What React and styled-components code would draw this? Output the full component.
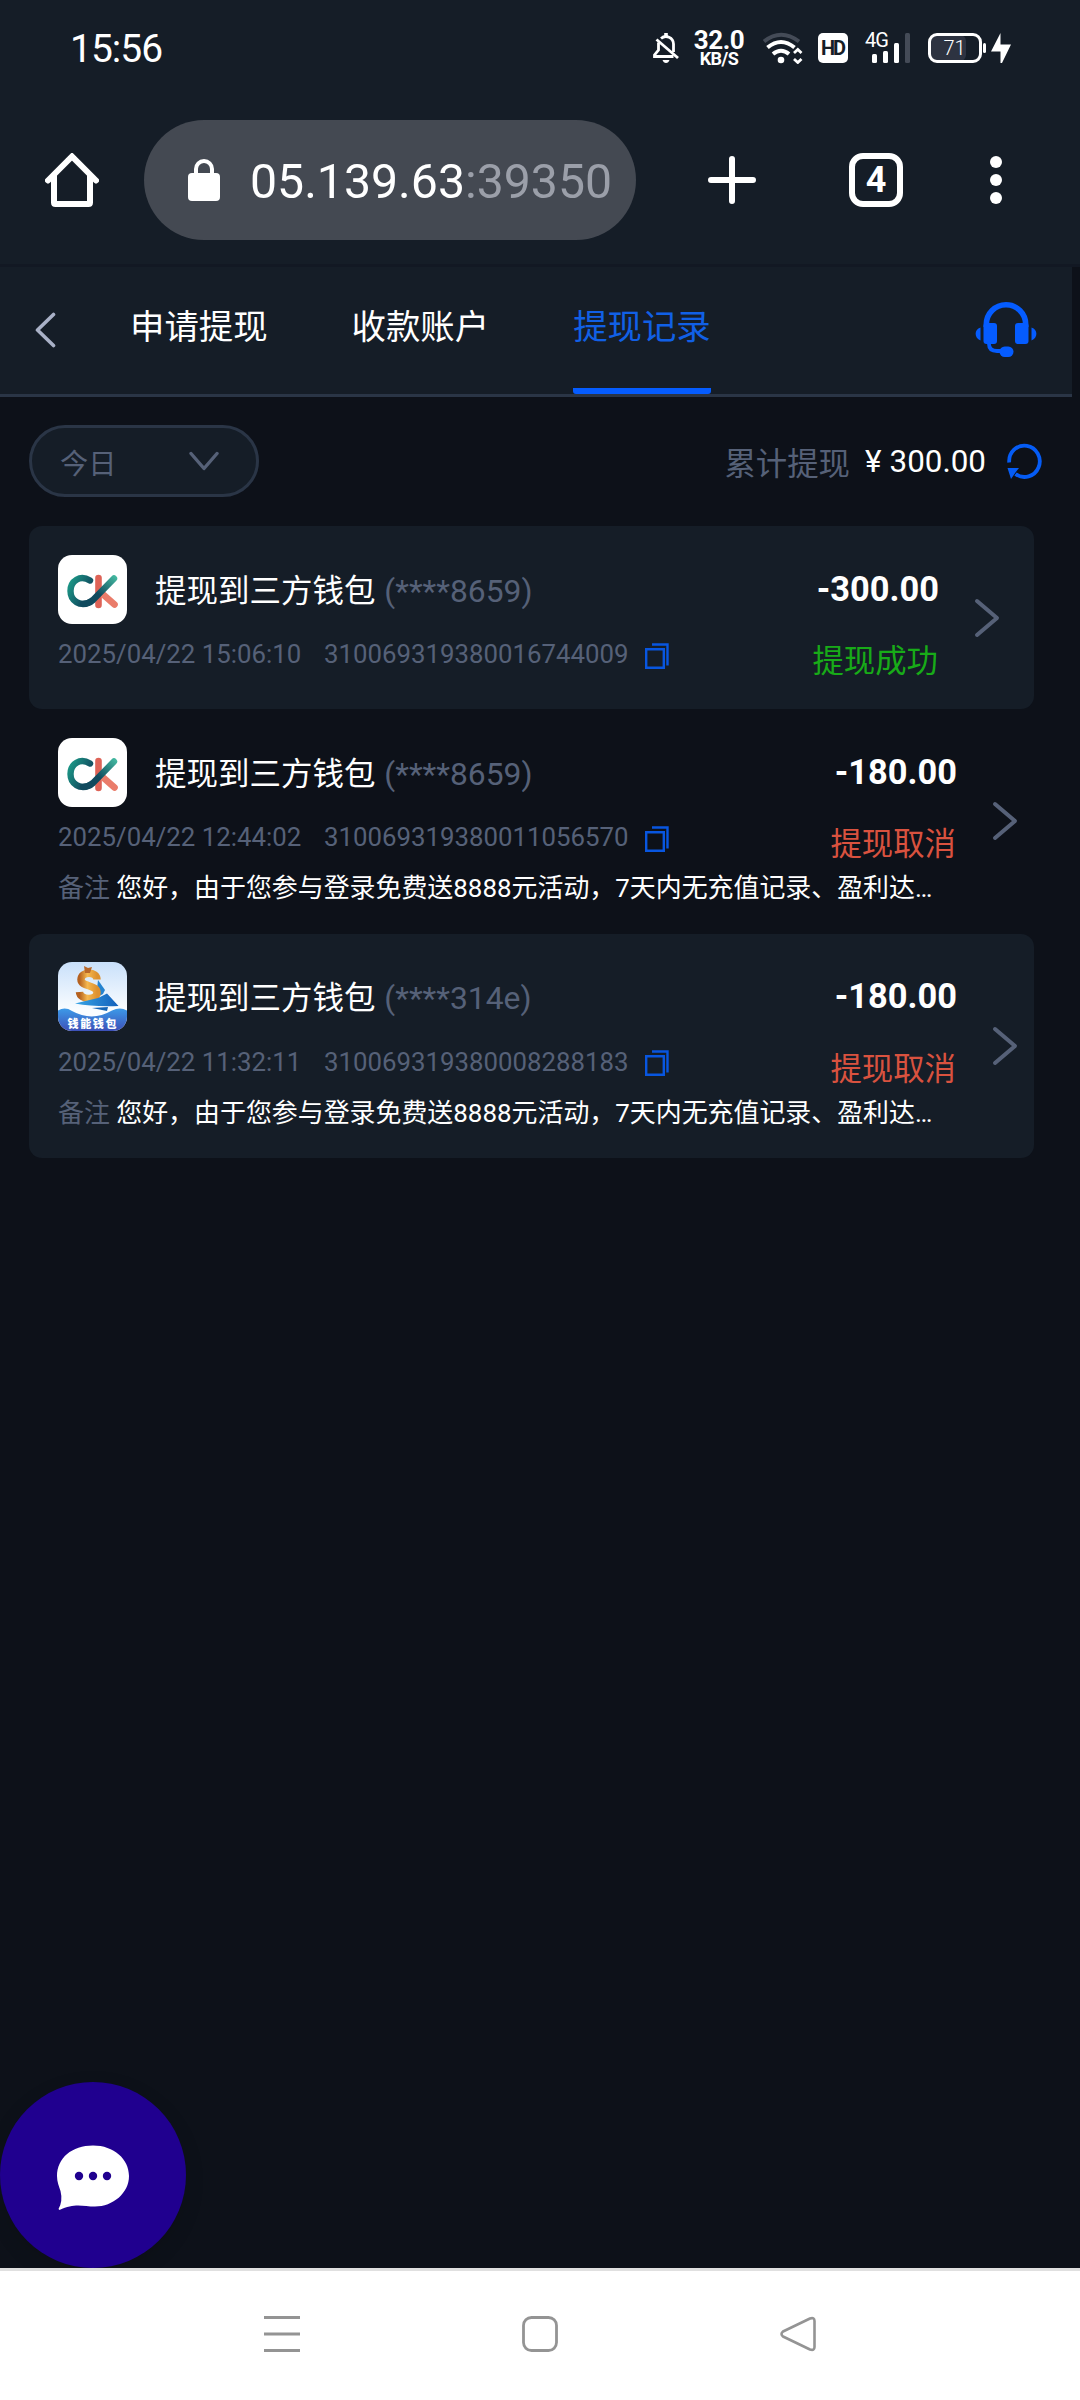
import styled, { createGlobalStyle } from "styled-components";

const RECORDS = [
  {
    id: "310069319380016744009",
    logo: "ck",
    account: "(****8659)",
    time: "2025/04/22 15:06:10",
    amount: "-300.00",
    status: "提现成功",
    success: true,
  },
  {
    id: "310069319380011056570",
    logo: "ck",
    account: "(****8659)",
    time: "2025/04/22 12:44:02",
    amount: "-180.00",
    status: "提现取消",
    remark: "您好，由于您参与登录免费送8888元活动，7天内无充值记录、盈利达…",
  },
  {
    id: "310069319380008288183",
    logo: "boat",
    account: "(****314e)",
    time: "2025/04/22 11:32:11",
    amount: "-180.00",
    status: "提现取消",
    remark: "您好，由于您参与登录免费送8888元活动，7天内无充值记录、盈利达…",
  },
];

function App() {
  return (
    <Screen>
      <GlobalStyle />
      <StatusBar />
      <BrowserBar />
      <PageHeader />
      <Filters />
      <List>
        {RECORDS.map((record, index) => (
          <RecordItem key={record.id} record={record} $filled={index % 2 === 0} />
        ))}
      </List>
      <ChatButton>
        <ChatIcon />
      </ChatButton>
      <SystemNav />
    </Screen>
  );
}

function StatusBar() {
  return (
    <StatusWrapper>
      <Clock>15:56</Clock>
      <StatusIcons>
        <BellOffIcon />
        <Speed>
          <SpeedValue>32.0</SpeedValue>
          <SpeedUnit>KB/S</SpeedUnit>
        </Speed>
        <WifiIcon />
        <HdBadge>HD</HdBadge>
        <Signal>
          <Network>4G</Network>
          <SignalIcon />
        </Signal>
        <BatteryIcon />
      </StatusIcons>
    </StatusWrapper>
  );
}

function BrowserBar() {
  return (
    <BrowserWrapper>
      <svg width="54" height="54" viewBox="0 0 54 54" fill="none" stroke="#fff">
        <path d="M3 27.500 27 3.500l24 24" strokeWidth="6" strokeLinecap="round" />
        <path d="M9 22v27.500q0 1.500 1.500 1.500h33q1.500 0 1.500-1.500V22" strokeWidth="6" />
      </svg>
      <UrlBar>
        <svg width="32" height="42" viewBox="0 0 32 42">
          <rect y="14" width="32" height="28" rx="4" fill="#fff" />
          <path
            d="M8 16v-6a8 8 0 0 1 16 0v6"
            fill="none"
            stroke="#fff"
            strokeWidth="4"
          />
        </svg>
        <Url>
          05.139.63<Port>:39350</Port>
        </Url>
      </UrlBar>
      <Actions>
        <svg width="48" height="48" viewBox="0 0 48 48">
          <path
            d="M24 3v42M3 24h42"
            stroke="#fff"
            strokeWidth="6"
            strokeLinecap="round"
          />
        </svg>
        <TabCount>4</TabCount>
        <svg width="12" height="48" viewBox="0 0 12 48" fill="#fff">
          <circle cx="6" cy="6" r="6" />
          <circle cx="6" cy="24" r="6" />
          <circle cx="6" cy="42" r="6" />
        </svg>
      </Actions>
    </BrowserWrapper>
  );
}

function PageHeader() {
  return (
    <HeaderWrapper>
      <svg width="21" height="36" viewBox="0 0 21 36" fill="none">
        <path
          d="M18.500 2.500 2.500 18l16 15.500"
          stroke="#a9b1c7"
          strokeWidth="3.600"
          strokeLinecap="round"
          strokeLinejoin="round"
        />
      </svg>
      <Tabs>
        <Tab>申请提现</Tab>
        <Tab>收款账户</Tab>
        <Tab $active>提现记录</Tab>
      </Tabs>
      <HeadsetIcon />
    </HeaderWrapper>
  );
}

function Filters() {
  return (
    <FiltersWrapper>
      <Select>
        今日
        <svg width="30" height="20" viewBox="0 0 30 20" fill="none">
          <path
            d="M2 2.500 15 17.500 28 2.500"
            stroke="#566178"
            strokeWidth="3.400"
            strokeLinecap="round"
            strokeLinejoin="round"
          />
        </svg>
      </Select>
      <Total>
        累计提现
        <TotalValue>
          <span>¥</span>
          <span>300.00</span>
        </TotalValue>
        <svg width="35" height="36" viewBox="0 0 35 36">
          <path
            d="M2.200 19.500A15.300 15.700 0 1 1 8.500 31"
            fill="none"
            stroke="#055cf5"
            strokeWidth="3.800"
          />
          <path d="M0.500 25h11.500l-3.500 4.500-4.500 6.500z" fill="#055cf5" />
        </svg>
      </Total>
    </FiltersWrapper>
  );
}

function RecordItem({ record, $filled }) {
  const { logo, account, time, id, amount, status, success, remark } = record;

  return (
    <Card $filled={$filled} $hasRemark={Boolean(remark)}>
      <Body>
        <Summary>
          <div>
            <TitleRow>
              {logo === "ck" ? <CkLogo /> : <BoatLogo />}
              <Title>
                提现到三方钱包 <Account>{account}</Account>
              </Title>
            </TitleRow>
            <Meta>
              <span>{time}</span>
              <span>{id}</span>
              <CopyIcon />
            </Meta>
          </div>
          <Result>
            <Amount>{amount}</Amount>
            <Status $success={success}>{status}</Status>
          </Result>
        </Summary>
        {remark && (
          <Remark>
            <Muted>备注</Muted> {remark}
          </Remark>
        )}
      </Body>
      <svg width="26" height="40" viewBox="0 0 26 40" fill="none">
        <path
          d="M3 3 23 20 3 37"
          stroke="#566178"
          strokeWidth="4"
          strokeLinecap="round"
          strokeLinejoin="round"
        />
      </svg>
    </Card>
  );
}

function SystemNav() {
  return (
    <NavWrapper>
      <svg width="36" height="36" viewBox="0 0 36 36">
        <path d="M0 1.500h36M0 18h36M0 34.500h36" stroke="#949494" strokeWidth="3" />
      </svg>
      <svg width="36" height="36" viewBox="0 0 36 36" fill="none">
        <rect
          x="1.500"
          y="1.500"
          width="33"
          height="33"
          rx="8"
          stroke="#949494"
          strokeWidth="2.800"
        />
      </svg>
      <svg width="36" height="36" viewBox="0 0 36 36" fill="none">
        <path
          d="M30 2.500 3 15.500q-3 2.500 0 5L30 33.500q4.500 1.500 4.500-2.500V5q0-4-4.500-2.500z"
          stroke="#949494"
          strokeWidth="2.600"
          strokeLinejoin="round"
        />
      </svg>
    </NavWrapper>
  );
}

function BellOffIcon() {
  return (
    <svg width="26" height="32" viewBox="0 0 26 32" fill="none" stroke="#fff">
      <path d="M8 6.500A7.500 7.500 0 0 1 20.500 12v8" strokeWidth="2.800" />
      <path d="M5.500 10.500V18L1.500 23v1.500h19" strokeWidth="2.800" />
      <path d="M13 1v4" strokeWidth="3.600" />
      <path d="M3.500 7.500 25 26" strokeWidth="2.800" />
      <path d="M9.500 28h7q-1 3-3.500 3t-3.500-3z" fill="#fff" stroke="none" />
    </svg>
  );
}

function WifiIcon() {
  return (
    <svg width="40" height="32" viewBox="0 0 40 32" fill="none">
      <path d="M1 9.500Q18 -4 36 9.500" stroke="#444b57" strokeWidth="4" />
      <path d="M4.500 15.500q13.500-11 27 0" stroke="#fff" strokeWidth="4" />
      <path d="M10 22q8-6.500 16 0" stroke="#fff" strokeWidth="4" />
      <circle cx="18" cy="28" r="3.300" fill="#fff" />
      <path
        d="m31 21 3.800-3.500L38.500 21M31 27l3.800 3.500L38.500 27"
        stroke="#fff"
        strokeWidth="2.800"
      />
    </svg>
  );
}

function SignalIcon() {
  return (
    <svg width="39" height="32" viewBox="6 0 39 32" fill="#fff">
      <rect x="6" y="22" width="5" height="9" rx="1.500" />
      <rect x="17" y="19" width="5" height="12" rx="1.500" />
      <rect x="28" y="11" width="5" height="20" rx="1.500" />
      <rect x="39" y="1" width="5" height="30" rx="1.500" fill="#444b57" />
    </svg>
  );
}

function BatteryIcon() {
  return (
    <svg width="84" height="32" viewBox="0 0 84 32">
      <rect x="3" y="3" width="35" height="26" rx="6" fill="#2d3341" />
      <rect
        x="1.500"
        y="2.500"
        width="51"
        height="27"
        rx="7.500"
        fill="none"
        stroke="#fff"
        strokeWidth="3"
      />
      <rect x="55" y="11" width="3" height="10" rx="1.500" fill="#fff" />
      <BatteryText x="15.500" y="23">
        71
      </BatteryText>
      <path d="M72.500 1v11.500H83L74 31h-1.500V19.500H63z" fill="#fff" />
    </svg>
  );
}

function HeadsetIcon() {
  return (
    <svg width="62" height="56" viewBox="0 0 62 56" fill="#055cff">
      <path
        d="M11.300 25v-2.500a19.700 19.700 0 0 1 39.400 0V25"
        fill="none"
        stroke="#055cff"
        strokeWidth="5.600"
      />
      <rect x="8.500" y="21" width="13.500" height="21" rx="3" />
      <rect x="40" y="21" width="13.500" height="21" rx="3" />
      <path d="M5.500 25.500v13C-1 36.500-1 27 5.500 25.500zM56.500 25.500v13c6.500-2 6.500-11.500 0-13z" />
      <path
        d="M14 40v2q0 7 8 7h6"
        fill="none"
        stroke="#055cff"
        strokeWidth="3.800"
      />
      <rect x="24.500" y="44.500" width="14" height="10.500" rx="5.200" />
    </svg>
  );
}

function CopyIcon() {
  return (
    <svg width="24" height="27" viewBox="0 0 24 27" fill="none">
      <path
        d="M1.200 6.200h17.600v18.600H1.200zM7 1.500h15.500V22.500"
        stroke="#0856e0"
        strokeWidth="2.400"
      />
    </svg>
  );
}

function CkLogo() {
  return (
    <svg width="69" height="69" viewBox="0 0 69 69" fill="none">
      <defs>
        <linearGradient id="ck-arm" x1="33" y1="50" x2="58" y2="22" gradientUnits="userSpaceOnUse">
          <stop offset="0.350" stopColor="#104a5e" />
          <stop offset="1" stopColor="#43b8a0" />
        </linearGradient>
        <linearGradient id="ck-curve" x1="10" y1="30" x2="30" y2="40" gradientUnits="userSpaceOnUse">
          <stop offset="0" stopColor="#1c9686" />
          <stop offset="1" stopColor="#104a5e" />
        </linearGradient>
      </defs>
      <rect width="69" height="69" rx="14" fill="#fff" />
      <path d="M40.500 23v27" stroke="#de6357" strokeWidth="6.600" strokeLinecap="round" />
      <path d="M44 38.500 56.500 49.500" stroke="#ea7c6a" strokeWidth="6.600" strokeLinecap="round" />
      <path
        d="M32 25.500C22 19.500 12.500 26 12.500 36S22 52 32 47"
        stroke="url(#ck-curve)"
        strokeWidth="6.400"
        strokeLinecap="round"
      />
      <path
        d="M25 49q5.500 0 10-4L56 23.500"
        stroke="url(#ck-arm)"
        strokeWidth="6.400"
        strokeLinecap="round"
      />
    </svg>
  );
}

function BoatLogo() {
  return (
    <svg width="69" height="69" viewBox="0 0 69 69">
      <defs>
        <linearGradient id="boat-sky" x2="0" y2="1">
          <stop offset="0" stopColor="#c9e0fa" />
          <stop offset="0.700" stopColor="#fafdff" />
        </linearGradient>
        <linearGradient id="boat-sea" x2="0" y2="1">
          <stop offset="0" stopColor="#3c9ae8" />
          <stop offset="1" stopColor="#3d50b8" />
        </linearGradient>
        <linearGradient id="boat-hull">
          <stop offset="0" stopColor="#38a5e6" />
          <stop offset="1" stopColor="#1260bb" />
        </linearGradient>
        <linearGradient id="boat-gold">
          <stop offset="0" stopColor="#b5611f" />
          <stop offset="0.450" stopColor="#f5b850" />
          <stop offset="1" stopColor="#dd9130" />
        </linearGradient>
        <clipPath id="boat-clip">
          <rect width="69" height="69" rx="14" />
        </clipPath>
      </defs>
      <g clipPath="url(#boat-clip)">
        <rect width="69" height="69" fill="url(#boat-sky)" />
        <path d="M40 18 47 28l-2 4-7 4z" fill="#2583cf" />
        <path
          d="M39 17.500C39 9 23 9 23 17.500 23 25 39 22.500 39 30.500 39 39 22 38 21.500 30"
          fill="none"
          stroke="url(#boat-gold)"
          strokeWidth="7.500"
        />
        <path d="m26 4 4 2 4-1-2 6h-5z" fill="#b9682a" />
        <path d="M17 41.500 40 36l9-4.500L60.500 44Q36 45 17 41.500z" fill="url(#boat-hull)" />
        <path d="m34 46 16-1-1 4z" fill="#1565b5" />
        <path d="M0 48.500q7-4 14 .5 20 11 40-.5 8-4 15 0V69H0z" fill="url(#boat-sea)" />
        <LogoText x="9.500" y="65.500" textLength="49">
          钱能钱包
        </LogoText>
      </g>
    </svg>
  );
}

function ChatIcon() {
  return (
    <svg width="72" height="66" viewBox="0 0 72 66">
      <path
        d="M36 .5C57 .5 72 14 72 31S56 61.500 38 61.500C26 61.500 18 57.500 2.500 65L1.500 64Q6 56 3.500 46C2 41 0 37 0 31 0 13 15 .5 36 .5z"
        fill="#fff"
      />
      <g fill="#20008f">
        <circle cx="22" cy="31" r="4.200" />
        <circle cx="36" cy="31" r="4.200" />
        <circle cx="50" cy="31" r="4.200" />
      </g>
    </svg>
  );
}

const GlobalStyle = createGlobalStyle`
  :root {
    --panel: #151d27;
    --page: #0d1119;
    --muted: #566178;
  }

  * {
    box-sizing: border-box;
  }

  body {
    margin: 0;
    background: var(--page);
    font-family: Roboto, "Noto Sans CJK SC", sans-serif;
    color: #fff;
  }

  svg {
    display: block;
    flex-shrink: 0;
  }
`;

const Screen = styled.div`
  width: 1080px;
  height: 2400px;
  display: flex;
  flex-direction: column;
  overflow: hidden;
`;

const StatusWrapper = styled.div`
  height: 96px;
  flex-shrink: 0;
  display: flex;
  align-items: center;
  justify-content: space-between;
  padding: 0 68px 0 70px;
  background: var(--panel);
`;

const Clock = styled.span`
  font-size: 39px;
  letter-spacing: -1px;
  padding-top: 1px;
`;

const StatusIcons = styled.div`
  display: flex;
  align-items: center;
`;

const Speed = styled.div`
  width: 50px;
  margin: 0 19px 0 15px;
  display: flex;
  flex-direction: column;
  align-items: center;
  font-weight: 700;
  white-space: nowrap;
`;

const SpeedValue = styled.span`
  font-size: 26px;
  line-height: 22px;
  letter-spacing: -0.500px;
`;

const SpeedUnit = styled.span`
  font-size: 18px;
  line-height: 16px;
  letter-spacing: -0.500px;
`;

const HdBadge = styled.span`
  width: 30px;
  height: 30px;
  margin: 0 18px 0 15px;
  border-radius: 5px;
  background: #fff;
  color: var(--panel);
  font-size: 20px;
  font-weight: 700;
  line-height: 31px;
  letter-spacing: -2px;
  text-indent: -1px;
  text-align: center;
`;

const Signal = styled.div`
  position: relative;
  padding-left: 6px;
  margin-right: 17px;
`;

const Network = styled.span`
  position: absolute;
  top: -2px;
  left: -1px;
  font-size: 20px;
  line-height: 20px;
  letter-spacing: -1px;
`;

const BatteryText = styled.text`
  font-size: 20px;
  font-weight: 300;
  fill: #fff;
`;

const BrowserWrapper = styled.div`
  height: 171px;
  flex-shrink: 0;
  display: flex;
  align-items: center;
  padding: 0 78px 0 45px;
  background: var(--panel);
  border-bottom: 3px solid #121823;
`;

const UrlBar = styled.div`
  width: 492px;
  height: 120px;
  margin-left: 45px;
  padding-left: 44px;
  display: flex;
  align-items: center;
  gap: 30px;
  border-radius: 60px;
  background: #444952;
`;

const Url = styled.span`
  padding-top: 2px;
  font-size: 48.200px;
  white-space: nowrap;
`;

const Port = styled.span`
  color: #9b9fa9;
`;

const Actions = styled.div`
  flex: 1;
  display: flex;
  align-items: center;
  justify-content: space-between;
  margin-left: 72px;
`;

const TabCount = styled.span`
  width: 54px;
  height: 54px;
  margin-left: 6px;
  border: 6px solid #fff;
  border-radius: 14px;
  font-size: 36px;
  font-weight: 700;
  line-height: 43px;
  text-align: center;
`;

const HeaderWrapper = styled.div`
  width: 1072px;
  height: 130px;
  flex-shrink: 0;
  display: flex;
  align-items: center;
  padding: 0 35px 2px 35px;
  background: var(--panel);
  border-bottom: 3px solid #2a3546;
`;

const Tabs = styled.div`
  flex: 1;
  align-self: flex-start;
  display: flex;
  gap: 84px;
  margin-left: 74px;
`;

const Tab = styled.div`
  height: 127px;
  border-bottom: ${(props) => props.$active && "6px solid #055cff"};
  border-radius: 3px;
  color: ${(props) => (props.$active ? "#1160e6" : "#fff")};
  font-size: 34.400px;
  line-height: 121px;
`;

const FiltersWrapper = styled.div`
  height: 129px;
  flex-shrink: 0;
  display: flex;
  align-items: center;
  justify-content: space-between;
  padding: 0 38px 1px 29px;
`;

const Select = styled.div`
  width: 230px;
  height: 72px;
  padding: 0 37px 0 28px;
  display: flex;
  align-items: center;
  justify-content: space-between;
  border: 3px solid #2a3546;
  border-radius: 36px;
  background: var(--panel);
  color: var(--muted);
  font-size: 28.200px;
`;

const Total = styled.div`
  display: flex;
  align-items: center;
  color: var(--muted);
  font-size: 31.400px;
`;

const TotalValue = styled.span`
  display: flex;
  gap: 8px;
  margin: 0 21px 0 15px;
  color: #fff;
`;

const List = styled.div`
  flex: 1;
  padding: 0 46px 0 29px;
`;

const Card = styled.div`
  height: ${(props) => (props.$hasRemark ? "224.500px" : "183px")};
  padding-left: 29px;
  padding-right: ${(props) => (props.$hasRemark ? "16px" : "34px")};
  display: flex;
  align-items: center;
  gap: 35px;
  border-radius: 13px;
  background: ${(props) => props.$filled && "var(--panel)"};
`;

const Body = styled.div`
  flex: 1;
  align-self: stretch;
  padding-top: 28.500px;
`;

const Summary = styled.div`
  display: flex;
  justify-content: space-between;
`;

const TitleRow = styled.div`
  display: flex;
  align-items: center;
  gap: 28px;
`;

const Title = styled.div`
  font-size: 31.500px;
  line-height: 73px;
  height: 69px;
`;

const Muted = styled.span`
  color: var(--muted);
`;

const Account = styled(Muted)`
  margin-left: 1px;
  font-size: 31.800px;
`;

const Meta = styled.div`
  height: 40px;
  margin-top: 10.500px;
  display: flex;
  align-items: center;
  color: var(--muted);
  font-size: 25.800px;

  span:first-child {
    width: 266px;
  }

  svg {
    margin: 4px 0 0 17px;
  }
`;

const Result = styled.div`
  display: flex;
  flex-direction: column;
  align-items: flex-end;
`;

const Amount = styled.div`
  font-size: 34.400px;
  font-weight: 700;
  line-height: 69px;
`;

const Status = styled.div`
  margin: 13.500px 1px 0 0;
  color: ${(props) => (props.$success ? "#18ab18" : "#d9523f")};
  font-size: 31.400px;
  line-height: 50px;
`;

const Remark = styled.div`
  margin-top: -2px;
  font-size: 25.930px;
  line-height: 40px;
  white-space: nowrap;
`;

const ChatButton = styled.button`
  width: 186px;
  height: 186px;
  flex-shrink: 0;
  padding: 6px 0 0;
  display: flex;
  align-items: center;
  justify-content: center;
  border: none;
  border-radius: 50%;
  background: #20008f;
  box-shadow: 0 6px 20px rgb(0 0 0 / 0.12);
`;

const NavWrapper = styled.nav`
  height: 132px;
  flex-shrink: 0;
  display: flex;
  justify-content: space-between;
  padding: 45px 264px 0;
  background: #fff;
  border-top: 3px solid #e0e0e0;
  position: relative;
`;

const LogoText = styled.text`
  font-size: 11px;
  font-weight: 900;
  fill: #fff;
`;

export default App;
